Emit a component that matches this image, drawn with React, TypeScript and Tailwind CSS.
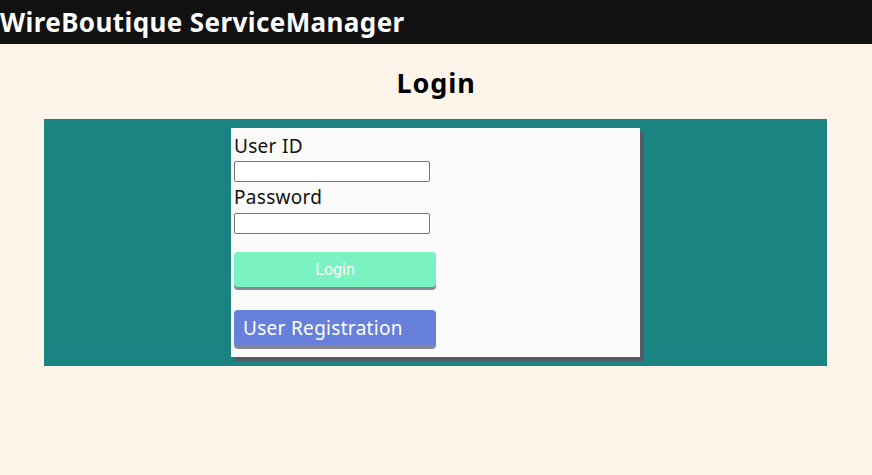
const font = { fontFamily: '"Noto Sans", "Open Sans", sans-serif' }

export default function App() {
  return (
    <div className="min-h-[475px] bg-[#fff4ea] text-black" style={font}>
      <header className="h-[44px] bg-[#111111] flex items-center">
        <h1 className="text-[26px] font-bold text-white leading-none tracking-[0.4px]">WireBoutique ServiceManager</h1>
      </header>

      <h2 className="text-center text-[27px] font-bold leading-none pt-[25px] pb-[23px] tracking-[0.9px]">Login</h2>

      <div className="ml-[44px] mr-[45px] bg-[#1b8482] pt-[9px] pb-[9px] flex justify-center">
        <div className="w-[409px] bg-[#fbfbfb] shadow-[4px_4px_0_0_#555b66] px-[3px] pt-[4px] pb-[11px]">
          <label className="block text-[19px] leading-[29px] tracking-[0.3px] text-[#111]">User ID</label>
          <input type="text" className="block w-[196px] h-[21px] border border-[#767676] rounded-[2px] bg-white" />
          <label className="block text-[19px] leading-[31px] tracking-[0.3px] text-[#111]">Password</label>
          <input type="password" className="block w-[196px] h-[21px] border border-[#767676] rounded-[2px] bg-white" />
          <button
            className="mt-[18px] w-[202px] h-[35px] rounded-[4px] bg-[#7af2c2] text-white text-[16px] shadow-[0_3px_0_0_#868a96]"
            style={{ fontFamily: '"Roboto", "Liberation Sans", sans-serif' }}
          >
            Login
          </button>
          <button className="mt-[23px] block w-[202px] h-[36px] rounded-[4px] bg-[#6780da] text-white text-[19px] tracking-[0.3px] text-left pl-[9px] shadow-[0_3px_0_0_#868a96]">
            User Registration
          </button>
        </div>
      </div>
    </div>
  )
}
